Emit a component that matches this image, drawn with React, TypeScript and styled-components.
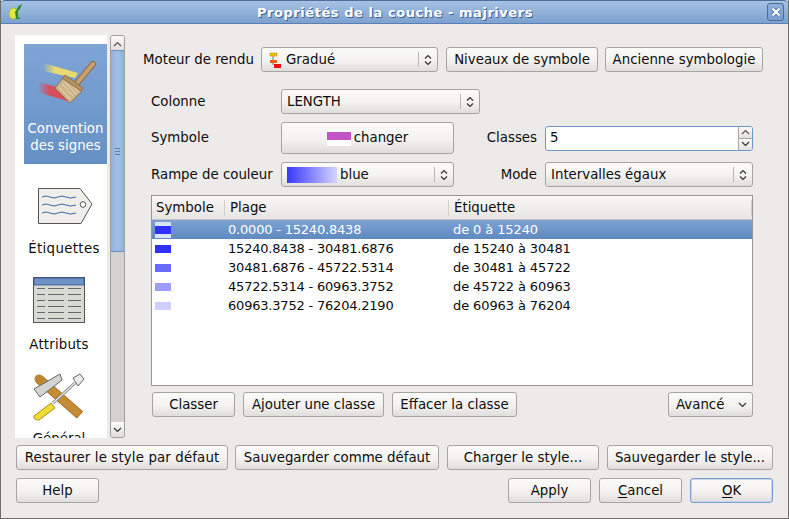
import React from 'react';
import styled, { createGlobalStyle } from 'styled-components';

const Global = createGlobalStyle`
  html, body { margin: 0; padding: 0; background: #ecebe9; }
  * { box-sizing: border-box; }
`;

const Win = styled.div`
  width: 789px; height: 519px; background: #ecebe9; display: flex; flex-direction: column;
  font-family: "DejaVu Sans", sans-serif; font-size: 13.33px; color: #0c0c0c; overflow: hidden;
  border: 1px solid #6e6e6a; border-top: 0;
`;
const TitleBar = styled.div`
  height: 24px; flex: none; display: flex; align-items: center; justify-content: space-between; padding: 0 5px 0 8px;
  background: linear-gradient(#a5c1e3, #7ea1d0); border-bottom: 1px solid #5a7fb5; border-top: 1px solid #4f6f9f;
  margin: 0 -1px; border-radius: 5px 5px 0 0;
`;
const Title = styled.div`
  flex: 1; text-align: center; font-weight: bold; color: #fff; font-size: 13px; letter-spacing: .55px;
  text-shadow: 1px 1px 0 #3f5f90;
`;
const CloseBox = styled.div`
  width: 17px; height: 18px; border: 1px solid #4f6c98; border-radius: 3px; display: flex; align-items: center; justify-content: center;
  background: linear-gradient(#8fb0dc, #7c9ed0);
`;
const Body = styled.div`
  flex: 1; display: flex; flex-direction: column; padding: 11px 15px 0 14px;
`;
const Top = styled.div`
  display: flex; height: 403px; flex: none;
`;
const Sidebar = styled.div`
  width: 92px; height: 403px; background: #fff; overflow: hidden; padding: 9px 0 0 9px; flex: none;
`;
const NavItem = styled.div<{ $h: number; $active?: boolean }>`
  width: 83px; height: ${p => p.$h}px; display: flex; flex-direction: column; align-items: center; text-align: center; flex: none;
  line-height: 17px; padding-top: 4px;
  background: ${p => (p.$active ? 'linear-gradient(#7fa5d5, #6690c4)' : 'transparent')};
  color: ${p => (p.$active ? '#fff' : '#0c0c0c')};
  svg { flex: none; }
`;
const NavLabel = styled.div<{ $mt: number; $ml?: number; $ls?: number }>`
  margin-top: ${p => p.$mt}px; margin-left: ${p => p.$ml ?? 0}px; white-space: nowrap; letter-spacing: ${p => p.$ls ?? 0}px;
`;
const Scroll = styled.div`
  width: 15px; height: 403px; margin-left: 3px; flex: none; display: flex; flex-direction: column;
  background: #d3d2cf; border: 1px solid #a09f9c; border-radius: 3px; overflow: hidden;
`;
const ScrollBtn = styled.div`
  height: 15px; flex: none; background: linear-gradient(#fcfcfb, #dfdeda); display: flex; align-items: center; justify-content: center;
`;
const Thumb = styled.div`
  height: 202px; flex: none; margin: -1px -1px 0; background: linear-gradient(90deg, #8db0dc, #a2c0e6 50%, #8eb0dc);
  border: 1px solid #6a8fc2; display: flex; align-items: center; justify-content: center;
`;
const Grip = styled.div`
  width: 5px; height: 7px; border-top: 1px solid #5f7ea9; border-bottom: 1px solid #5f7ea9; position: relative;
  &::after { content: ''; position: absolute; left: 0; right: 0; top: 2px; height: 1px; background: #5f7ea9; }
`;
const Spacer = styled.div`flex: 1;`;
const Main = styled.div`
  flex: 1; display: flex; flex-direction: column; padding: 12px 0 0 18px; min-width: 0;
`;
const RenderRow = styled.div`
  display: flex; align-items: center; height: 25px; flex: none;
`;
const Label = styled.div<{ $w?: number; $right?: boolean; $raise?: boolean }>`
  width: ${p => (p.$w ? p.$w + 'px' : 'auto')}; flex: none; white-space: nowrap; text-align: ${p => (p.$right ? 'right' : 'left')};
  padding-bottom: ${p => (p.$raise ? 2 : 0)}px;
`;
const Btn = styled.div<{ $w: number; $h?: number; $focus?: boolean; $ml?: number; $ls?: number }>`
  width: ${p => p.$w}px; height: ${p => p.$h ?? 25}px; margin-left: ${p => p.$ml ?? 0}px; flex: none;
  display: flex; align-items: center; justify-content: center; white-space: nowrap;
  letter-spacing: ${p => p.$ls ?? 0}px;
  padding-bottom: ${p => (p.$h ? 2 : 0)}px;
  border: 1px solid ${p => (p.$focus ? '#7d9fcd' : '#a6a5a1')}; border-radius: 3px;
  background: linear-gradient(#fbfbfa, #f3f2f0 55%, #dfdedb);
  box-shadow: ${p => (p.$focus ? 'inset 0 0 0 1px #c6d7ec' : 'none')};
  u { text-underline-offset: 2px; }
`;
const Combo = styled.div<{ $w: number; $pl?: number; $ml?: number }>`
  width: ${p => p.$w}px; height: 25px; flex: none; display: flex; align-items: center; padding-left: ${p => p.$pl ?? 5}px;
  margin-left: ${p => p.$ml ?? 0}px;
  border: 1px solid #a6a5a1; border-radius: 3px; background: linear-gradient(#fbfbfa, #f3f2f0 55%, #dfdedb);
  white-space: nowrap;
`;
const ComboText = styled.div`flex: 1; display: flex; align-items: center; gap: 5px;`;
const ComboArrow = styled.div<{ $plain?: boolean }>`
  width: 19px; height: 15px; flex: none; border-left: ${p => (p.$plain ? '0' : '1px solid #b9b8b5')}; display: flex; align-items: center; justify-content: center;
`;
const Form = styled.div`
  display: flex; flex-direction: column; padding: 10px 0 0 8px; flex: none;
`;
const FormRow = styled.div<{ $mt?: number }>`
  display: flex; align-items: center; margin-top: ${p => p.$mt ?? 0}px; flex: none;
`;
const Spin = styled.div`
  width: 208px; height: 25px; flex: none; margin-left: 8px; display: flex; border: 1px solid #6f96c8; border-radius: 3px; background: #fff; overflow: hidden;
`;
const SpinText = styled.div`flex: 1; padding-left: 4px; line-height: 22px;`;
const SpinBtns = styled.div`
  width: 14px; flex: none; border-left: 1px solid #a6a5a1; display: flex; flex-direction: column;
`;
const SpinBtn = styled.div`
  flex: 1; display: flex; align-items: center; justify-content: center; background: linear-gradient(#fbfbfa, #e2e1de);
  & + & { border-top: 1px solid #a6a5a1; }
`;
const Swatch = styled.div`
  width: 24px; height: 16px; background: linear-gradient(#fff 0 2px, #c254c8 2px 10px, #fff 10px); margin: 2px 3px 0 0; flex: none;
`;
const Ramp = styled.div`
  width: 50px; height: 16px; background: linear-gradient(90deg, #3838ff, #d4d4ff); flex: none; margin-right: -2px;
`;
const Table = styled.div`
  width: 602px; height: 191px; margin-top: 8px; margin-left: 8px; flex: none; background: #fff; border: 1px solid #979693; display: flex; flex-direction: column; overflow: hidden;
`;
const Head = styled.div`
  display: flex; height: 24px; flex: none; background: linear-gradient(#f9f8f7, #e6e5e2); border-bottom: 1px solid #c2c1be; align-items: center;
`;
const HeadCell = styled.div<{ $w: number; $pl?: number }>`
  width: ${p => p.$w}px; height: 16px; line-height: 16px; flex: none; padding-left: ${p => p.$pl ?? 4}px; border-right: 1px solid #cfcecb;
`;
const Rows = styled.div`display: flex; flex-direction: column; font-size: 13px;`;
const Row = styled.div<{ $sel?: boolean }>`
  display: flex; height: 19px; align-items: center; flex: none;
  background: ${p => (p.$sel ? 'linear-gradient(#7ca2d3, #6089bf)' : 'transparent')};
  color: ${p => (p.$sel ? '#fff' : '#0c0c0c')};
`;
const SwatchCell = styled.div`width: 76px; flex: none; padding-left: 3px; display: flex; align-items: center;`;
const RowSwatch = styled.div<{ $c: string; $sel?: boolean }>`
  width: 16px; height: 16px; flex: none;
  background: linear-gradient(${p => (p.$sel ? '#d8e4f3' : '#fff')} 0 4px, ${p => p.$c} 4px 12px, ${p => (p.$sel ? '#d8e4f3' : '#fff')} 12px);
`;
const RangeCell = styled.div`width: 225px; flex: none; white-space: nowrap; letter-spacing: -0.2px;`;
const LabelCell = styled.div`flex: 1; white-space: nowrap; letter-spacing: -0.1px;`;
const ActionRow = styled.div`
  display: flex; align-items: center; margin-top: 6px; margin-left: 9px; flex: none; width: 601px;
`;
const Footer = styled.div`display: flex; flex-direction: column; flex: none; margin-top: 7px; padding-left: 1px;`;
const FooterRow = styled.div<{ $mt?: number }>`display: flex; align-items: center; margin-top: ${p => p.$mt ?? 0}px;`;

const Up = () => <svg width="9" height="6" viewBox="0 0 9 6"><path d="M1 5 L4.5 1.5 L8 5" fill="none" stroke="#555" strokeWidth="1.2" /></svg>;
const Down = () => <svg width="9" height="6" viewBox="0 0 9 6"><path d="M1 1 L4.5 4.5 L8 1" fill="none" stroke="#333" strokeWidth="1.2" /></svg>;
const UpDown = () => (
  <svg width="8" height="12" viewBox="0 0 8 12"><path d="M1 4.5 L4 1.5 L7 4.5 M1 7.5 L4 10.5 L7 7.5" fill="none" stroke="#333" strokeWidth="1.2" /></svg>
);

const BrushIcon = () => (
  <svg width="60" height="46" viewBox="0 0 60 46" style={{ marginLeft: 4, marginTop: 12 }}>
    <defs>
      <linearGradient id="y" x1="0" x2="1"><stop offset="0" stopColor="#e8dc70" stopOpacity="0" /><stop offset=".35" stopColor="#e6da70" /></linearGradient>
      <linearGradient id="r" x1="0" x2="1"><stop offset="0" stopColor="#d84a5a" stopOpacity="0" /><stop offset=".35" stopColor="#d84e5c" /></linearGradient>
    </defs>
    <path d="M5 3 L40 13 L37 18 L5 11 Z" fill="url(#y)" />
    <path d="M0 22 L19 27 L32 42 L0 32 Z" fill="url(#r)" />
    <path d="M40 22 L55 4" stroke="#8e6f44" strokeWidth="6" strokeLinecap="round" />
    <path d="M40 22 L55 4" stroke="#c9a070" strokeWidth="4" strokeLinecap="round" />
    <path d="M25 18 L44 31 L32 43 L17 28 Z" fill="#cdb48a" stroke="#94764d" />
    <path d="M21 27 L32 39 M24 24 L35 36 M27 22 L38 34 M30 21 L40 31" stroke="#ead9ba" strokeWidth="1" />
    <path d="M24 18 L27 15 L45 28 L43 31 Z" fill="#b8935f" stroke="#8e6f44" />
  </svg>
);
const TagIcon = () => (
  <svg width="56" height="36" viewBox="0 0 56 36" style={{ marginTop: 20, marginLeft: -2 }}>
    <path d="M1.5 .5 H43 L55 16 L44 35.5 H1.5 Z" fill="#efeeea" stroke="#555" />
    <circle cx="46" cy="16.5" r="2.8" fill="#fff" stroke="#555" />
    <path d="M5 9 q4 -2 8 0 t8 0 t8 0 t10 0 M5 17 q4 -2 8 0 t8 0 t8 0 t10 0 M5 25 q4 -2 8 0 t8 0 t8 0 t10 0" fill="none" stroke="#3d68a8" />
  </svg>
);
const TableIcon = () => (
  <svg width="52" height="46" viewBox="0 0 52 46" style={{ marginTop: 13, marginLeft: -13 }}>
    <rect x=".5" y=".5" width="51" height="45" fill="#d8dad4" stroke="#555" />
    <rect x="1" y="1" width="50" height="7" fill="#6f93c8" stroke="#2f5596" strokeWidth=".8" />
    <path d="M4 11.5 H12 M15 11.5 H31 M35 11.5 H48 M4 17.5 H12 M15 17.5 H31 M35 17.5 H48 M4 23.5 H12 M15 23.5 H31 M35 23.5 H48 M4 29.5 H12 M15 29.5 H31 M35 29.5 H48 M4 35.5 H12 M15 35.5 H31 M35 35.5 H48 M4 41.5 H12 M15 41.5 H31 M35 41.5 H48" stroke="#666" />
  </svg>
);
const ToolsIcon = () => (
  <svg width="52" height="50" viewBox="0 0 52 50" style={{ marginTop: 13, marginLeft: -13 }}>
    <path d="M6 7 L47 43" stroke="#9a6a20" strokeWidth="9.5" />
    <path d="M6 7 L46.5 42.5" stroke="#c48c36" strokeWidth="8" />
    <circle cx="6" cy="7" r="4.5" fill="#bd8530" />
    <path d="M1 17 L27 2 L29 8 L7 25 Z" fill="#d4d4d1" stroke="#666" />
    <path d="M20 31 L42 11" stroke="#777" strokeWidth="3" />
    <path d="M20 31 L42 11" stroke="#e8e8e6" strokeWidth="1.4" />
    <path d="M40 6 L47 2 L51 7 L45 14 Z" fill="#ececea" stroke="#666" />
    <path d="M1 44 L18 31 L22 36 L6 48 Q0 48 1 44 Z" fill="#f0da34" stroke="#a89020" />
  </svg>
);
const RendererIcon = () => (
  <svg width="14" height="16" viewBox="0 0 14 16">
    <path d="M6 4 V13 M6 9 H9" stroke="#777" />
    <rect x="3" y="1" width="7" height="3" fill="#f0c000" stroke="#b08a00" strokeWidth=".5" />
    <rect x="3" y="8" width="7" height="3" fill="#f06010" />
    <rect x="7" y="12" width="7" height="4" fill="#e81010" />
  </svg>
);
const QgisLogo = () => (
  <svg width="15" height="16" viewBox="0 0 15 16">
    <ellipse cx="5.5" cy="9.5" rx="4.5" ry="5.5" fill="#e6e84a" stroke="#9ab82a" strokeWidth=".8" />
    <path d="M14 0 L12 5 L10 7 L10 13 L13 15 L8 15 L7 8 L9 5 L10.5 2 Z" fill="#2f8a2a" />
  </svg>
);

const rows = [
  ['#2f2fff', '0.0000 - 15240.8438', 'de 0 à 15240'],
  ['#3030ff', '15240.8438 - 30481.6876', 'de 15240 à 30481'],
  ['#6a6aff', '30481.6876 - 45722.5314', 'de 30481 à 45722'],
  ['#9d9dff', '45722.5314 - 60963.3752', 'de 45722 à 60963'],
  ['#cfcfff', '60963.3752 - 76204.2190', 'de 60963 à 76204'],
];

export default function App() {
  return (
    <Win>
      <Global />
      <TitleBar>
        <QgisLogo />
        <Title>Propriétés de la couche - majrivers</Title>
        <CloseBox>
          <svg width="12" height="12" viewBox="0 0 12 12">
            <path d="M2.5 2.5 L9.5 9.5 M9.5 2.5 L2.5 9.5" stroke="#4a6a9a" strokeWidth="3.6" />
            <path d="M2.5 2.5 L9.5 9.5 M9.5 2.5 L2.5 9.5" stroke="#fff" strokeWidth="2.2" />
          </svg>
        </CloseBox>
      </TitleBar>
      <Body>
        <Top>
          <Sidebar>
            <NavItem $h={120} $active>
              <BrushIcon />
              <NavLabel $mt={14}>Convention<br />des signes</NavLabel>
            </NavItem>
            <NavItem $h={96}>
              <TagIcon />
              <NavLabel $mt={16} $ml={-3} $ls={0.35}>Étiquettes</NavLabel>
            </NavItem>
            <NavItem $h={95}>
              <TableIcon />
              <NavLabel $mt={13} $ml={-13} $ls={0.2}>Attributs</NavLabel>
            </NavItem>
            <NavItem $h={96}>
              <ToolsIcon />
              <NavLabel $mt={8} $ml={-13}>Général</NavLabel>
            </NavItem>
          </Sidebar>
          <Scroll>
            <ScrollBtn><Up /></ScrollBtn>
            <Thumb><Grip /></Thumb>
            <Spacer />
            <ScrollBtn><Down /></ScrollBtn>
          </Scroll>
          <Main>
            <RenderRow>
              <Label $w={118}>Moteur de rendu</Label>
              <Combo $w={177}>
                <ComboText><RendererIcon />Gradué</ComboText>
                <ComboArrow><UpDown /></ComboArrow>
              </Combo>
              <Btn $w={152} $ml={8}>Niveaux de symbole</Btn>
              <Btn $w={158} $ml={7}>Ancienne symbologie</Btn>
            </RenderRow>
            <Form>
              <FormRow $mt={7}>
                <Label $w={130}>Colonne</Label>
                <Combo $w={199}>
                  <ComboText>LENGTH</ComboText>
                  <ComboArrow><UpDown /></ComboArrow>
                </Combo>
              </FormRow>
              <FormRow $mt={8}>
                <Label $w={130} $raise>Symbole</Label>
                <Btn $w={173} $h={32}><Swatch />changer</Btn>
                <Label $w={83} $right $raise>Classes</Label>
                <Spin>
                  <SpinText>5</SpinText>
                  <SpinBtns>
                    <SpinBtn><Up /></SpinBtn>
                    <SpinBtn><Down /></SpinBtn>
                  </SpinBtns>
                </Spin>
              </FormRow>
              <FormRow $mt={8}>
                <Label $w={130}>Rampe de couleur</Label>
                <Combo $w={173}>
                  <ComboText><Ramp />blue</ComboText>
                  <ComboArrow><UpDown /></ComboArrow>
                </Combo>
                <Label $w={83} $right>Mode</Label>
                <Combo $w={208} $ml={8}>
                  <ComboText>Intervalles égaux</ComboText>
                  <ComboArrow><UpDown /></ComboArrow>
                </Combo>
              </FormRow>
            </Form>
            <Table>
              <Head>
                <HeadCell $w={73}>Symbole</HeadCell>
                <HeadCell $w={224} $pl={5}>Plage</HeadCell>
                <HeadCell $w={303} $pl={5}>Étiquette</HeadCell>
              </Head>
              <Rows>
                {rows.map((r, i) => (
                  <Row key={r[1]} $sel={i === 0}>
                    <SwatchCell><RowSwatch $c={r[0]} $sel={i === 0} /></SwatchCell>
                    <RangeCell>{r[1]}</RangeCell>
                    <LabelCell>{r[2]}</LabelCell>
                  </Row>
                ))}
              </Rows>
            </Table>
            <ActionRow>
              <Btn $w={83}>Classer</Btn>
              <Btn $w={141} $ml={8}>Ajouter une classe</Btn>
              <Btn $w={125} $ml={8}>Effacer la classe</Btn>
              <Spacer />
              <Combo $w={85} $pl={7}>
                <ComboText>Avancé</ComboText>
                <ComboArrow $plain><Down /></ComboArrow>
              </Combo>
            </ActionRow>
          </Main>
        </Top>
        <Footer>
          <FooterRow>
            <Btn $w={212} $ls={0.14}>Restaurer le style par défaut</Btn>
            <Btn $w={204} $ml={7}>Sauvegarder comme défaut</Btn>
            <Btn $w={152} $ml={8}>Charger le style...</Btn>
            <Btn $w={166} $ml={8}>Sauvegarder le style...</Btn>
          </FooterRow>
          <FooterRow $mt={8}>
            <Btn $w={83}>Help</Btn>
            <Spacer />
            <Btn $w={83}>Apply</Btn>
            <Btn $w={83} $ml={8}><span><u>C</u>ancel</span></Btn>
            <Btn $w={83} $ml={8} $focus><span><u>O</u>K</span></Btn>
          </FooterRow>
        </Footer>
      </Body>
    </Win>
  );
}
